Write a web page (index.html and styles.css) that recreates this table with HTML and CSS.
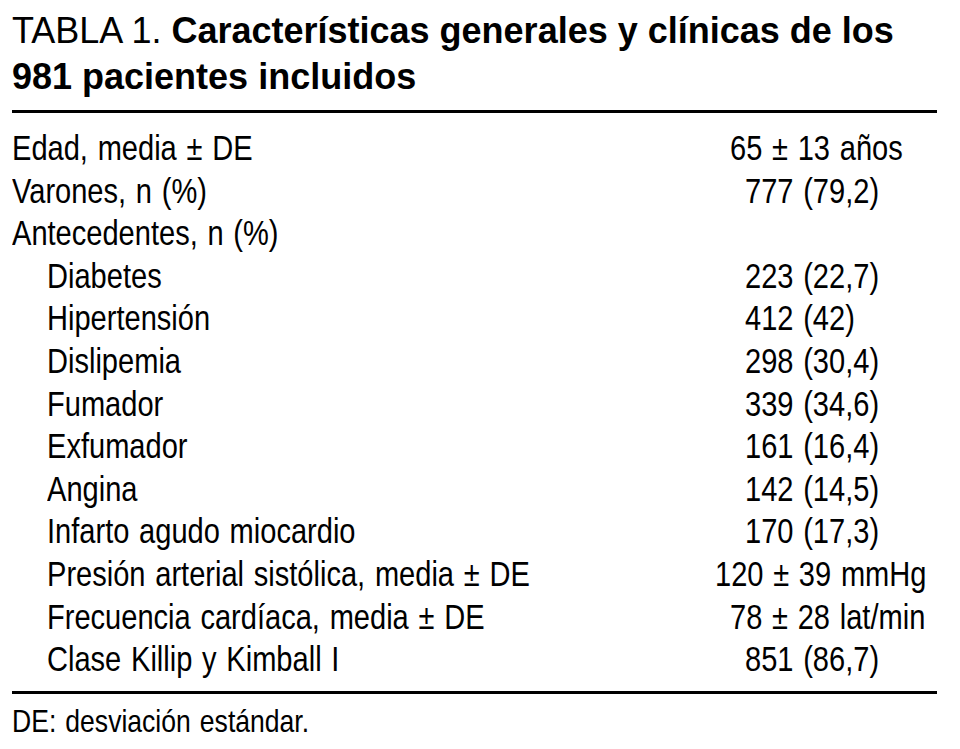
FILE: index.html
```html
<!DOCTYPE html>
<html lang="es">
<head>
<meta charset="utf-8">
<title>Tabla 1</title>
<link rel="stylesheet" href="styles.css">
</head>
<body>
<div class="page">
  <h1 class="title">TABLA 1. <b>Características generales y clínicas de los 981 pacientes incluidos</b></h1>
  <div class="table">
    <div class="row"><div class="lab"><span class="nw">Edad, media ± DE</span></div><div class="val in15"><span class="nw">65 ± 13 años</span></div></div>
    <div class="row"><div class="lab"><span class="nw">Varones, n (%)</span></div><div class="val in30"><span class="nw">777 (79,2)</span></div></div>
    <div class="row"><div class="lab"><span class="nw">Antecedentes, n (%)</span></div><div class="val"></div></div>
    <div class="row"><div class="lab sub"><span class="nw">Diabetes</span></div><div class="val in30"><span class="nw">223 (22,7)</span></div></div>
    <div class="row"><div class="lab sub"><span class="nw">Hipertensión</span></div><div class="val in30"><span class="nw">412 (42)</span></div></div>
    <div class="row"><div class="lab sub"><span class="nw">Dislipemia</span></div><div class="val in30"><span class="nw">298 (30,4)</span></div></div>
    <div class="row"><div class="lab sub"><span class="nw">Fumador</span></div><div class="val in30"><span class="nw">339 (34,6)</span></div></div>
    <div class="row"><div class="lab sub"><span class="nw">Exfumador</span></div><div class="val in30"><span class="nw">161 (16,4)</span></div></div>
    <div class="row"><div class="lab sub"><span class="nw">Angina</span></div><div class="val in30"><span class="nw">142 (14,5)</span></div></div>
    <div class="row"><div class="lab sub"><span class="nw">Infarto agudo miocardio</span></div><div class="val in30"><span class="nw">170 (17,3)</span></div></div>
    <div class="row"><div class="lab sub"><span class="nw">Presión arterial sistólica, media ± DE</span></div><div class="val"><span class="nw">120 ± 39 mmHg</span></div></div>
    <div class="row"><div class="lab sub"><span class="nw">Frecuencia cardíaca, media ± DE</span></div><div class="val in15"><span class="nw">78 ± 28 lat/min</span></div></div>
    <div class="row"><div class="lab sub"><span class="nw">Clase Killip y Kimball I</span></div><div class="val in30"><span class="nw">851 (86,7)</span></div></div>
  </div>
  <p class="note"><span class="nw">DE: desviación estándar.</span></p>
</div>
</body>
</html>
```
FILE: styles.css
```css
html, body {
  margin: 0;
  padding: 0;
  background: #fff;
  color: #000;
  overflow: hidden;
}
.page {
  width: 925px;
  padding: 0 0 0 12px;
}
.title {
  margin: 0;
  padding-top: 8px;
  font-family: "Liberation Sans", Arial, sans-serif;
  font-size: 36px;
  line-height: 46px;
  font-weight: normal;
  padding-bottom: 10px;
  border-bottom: 3px solid #000;
}
.title b {
  font-weight: bold;
}
.table {
  font-family: "Liberation Sans", Arial, sans-serif;
  font-size: 35px;
  padding: 14px 0 10px;
  border-bottom: 3px solid #000;
}
.row {
  display: grid;
  grid-template-columns: 703px 1fr;
  height: 42.6px;
  line-height: 42.6px;
  white-space: nowrap;
}
.lab, .val {
  min-width: 0;
}
.nw {
  display: inline-block;
  white-space: nowrap;
  transform: scaleX(0.83);
  transform-origin: 0 50%;
  word-spacing: 2px;
}
.lab.sub {
  padding-left: 35px;
}
.in15 { padding-left: 15px; }
.in30 { padding-left: 30px; }
.note {
  margin: 0;
  padding-top: 6px;
  font-family: "Liberation Sans", Arial, sans-serif;
  font-size: 32px;
  line-height: 42px;
}
```
